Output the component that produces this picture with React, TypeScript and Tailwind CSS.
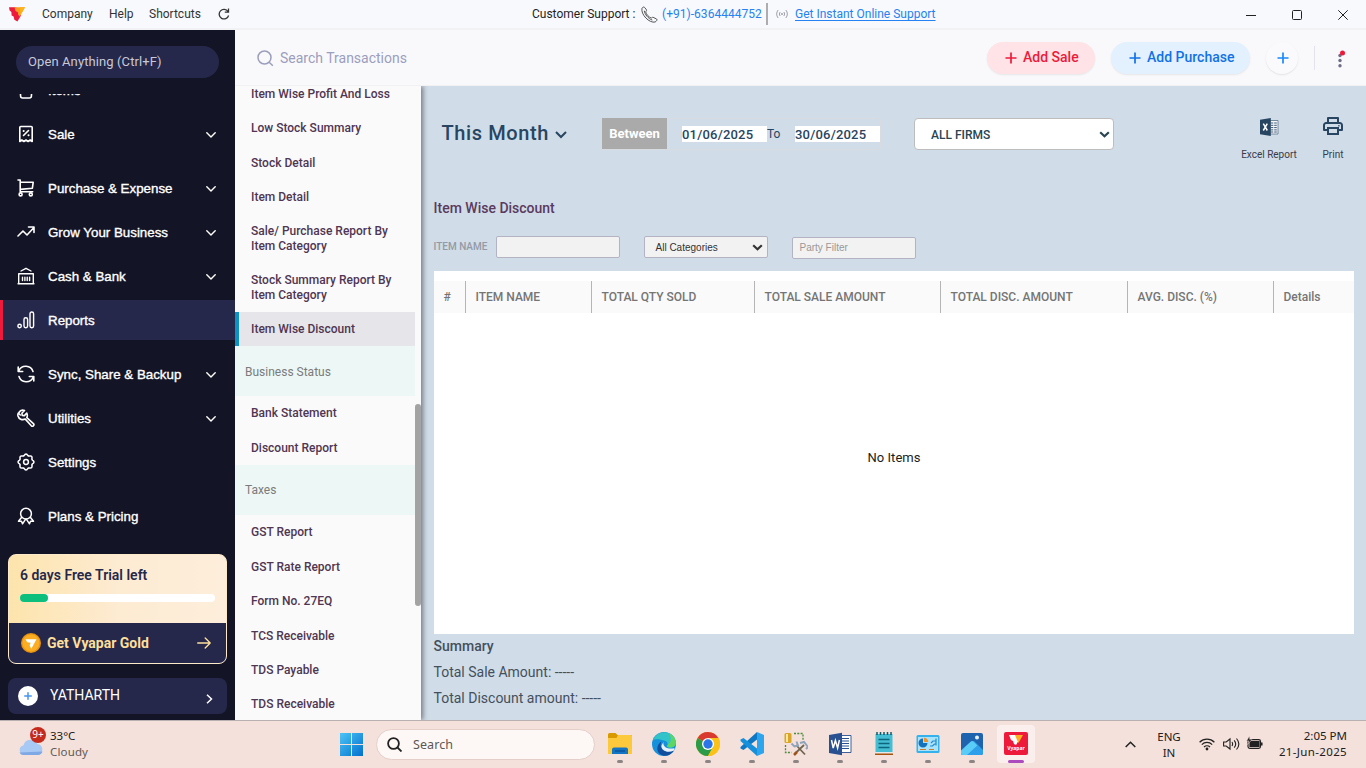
import React from "react";

type IconProps = { className?: string };

function Svg({ children, size = 18, w = 1.6, box = 18 }: { children: React.ReactNode; size?: number; w?: number; box?: number }) {
  return (
    <svg width={size} height={size} viewBox={`0 0 ${box} ${box}`} fill="none" stroke="currentColor" strokeWidth={w} strokeLinecap="round" strokeLinejoin="round" className="shrink-0">
      {children}
    </svg>
  );
}

function gearPath() {
  let d = "";
  for (let i = 0; i < 96; i++) {
    const a = (i / 96) * Math.PI * 2;
    const r = 7.2 + 0.7 * Math.cos(8 * a);
    d += `${i ? "L" : "M"}${(9 + r * Math.cos(a)).toFixed(2)} ${(9 + r * Math.sin(a)).toFixed(2)}`;
  }
  return d + "z";
}

function VLogo({ className }: IconProps) {
  return (
    <svg viewBox="0 0 16 15" className={className}>
      <path d="M0 .3h7.2L12 8.6 8.4 14.4 5.4 12.8 4.6 9.6 2.6 8.4 2.4 5 .6 3.4z" fill="#ed1a3b" />
      <path d="M5.500.3H16L10.800 9.400 9.300 8 8.800 5.200 6.500 4z" fill="#fb9d22" />
      <path d="M11 .3h5L11.4 8z" fill="#fdb515" />
    </svg>
  );
}

const icons: Record<string, React.ReactNode> = {
  items: <Svg><path d="M3 6h12l-.6 9a2 2 0 0 1-2 2H5.600a2 2 0 0 1-2-2zM6 6a3 3 0 0 1 6 0" /></Svg>,
  sale: <Svg><path d="M2.800 16.500V2.500A1 1 0 0 1 3.800 1.500h10.400a1 1 0 0 1 1 1v14l-2-1.500-2.100 1.500L9 15l-2.100 1.500L4.800 15zM6.500 10.500l5-5" /><path d="M6.600 6h.1M11.500 10.200h.1" strokeWidth="2" /></Svg>,
  purchase: <Svg><path d="M1 1h2.200v11.200M3.200 3.200h13l-.8 6-12.200 1.200M3.200 12.700h12.500" /><circle cx="3.600" cy="15.400" r="1.500" /><circle cx="13.800" cy="15.400" r="1.500" /></Svg>,
  grow: <Svg><path d="M1 13l5-5 4 4 7-7.500M11.500 4h5.500v5.500" /></Svg>,
  bank: <Svg w={1.400}><path d="M1.700 6.800h14.600v9.700M1.700 6.800v9.700M4 4L9 1.300 14 4M1 16.700h16M5.500 10.200v3.300M7.900 10.200v3.300M10.200 10.200v3.300M12.600 10.200v3.300" /></Svg>,
  reports: <Svg w={1.400}><circle cx="2.600" cy="15" r="1.700" /><rect x="7" y="6.800" width="3.600" height="10" rx="1.700" /><rect x="13" y="1" width="3.600" height="15.800" rx="1.700" /></Svg>,
  sync: <Svg><path d="M1.200 2v4.500h4.500M1.800 5.800A7.600 7.600 0 0 1 16 6.500M16.800 16v-4.500h-4.500M16.200 12.200A7.600 7.600 0 0 1 2 11.500" /></Svg>,
  utilities: <Svg><path d="M7.500 1.500L4.900 4.200l.3 2.200 2.200.2 2.400-2.600c.9 2.200.6 3.500 0 4.600l6.600 6a1.500 1.500 0 0 1-2.100 2.200l-6-6.700C5 11.500 1.800 10 1 7c-.3-1.300-.1-2.200.3-3l2 2M2 3.500C3.200 1.300 5.500.700 7.500 1.500" /></Svg>,
  settings: <Svg w={1.500}><path d={gearPath()} /><circle cx="9" cy="9" r="2.400" /></Svg>,
  plans: <Svg w={1.500}><circle cx="9" cy="6.700" r="5.400" /><path d="M4.500 10.500L1.500 14.300l3-.1 1 2.600 3-4.500M13.500 10.500l3 3.800-3-.1-1 2.600-3-4.500" /></Svg>,
};

function Chevron({ className = "" }: IconProps) {
  return (
    <svg width="10" height="6" viewBox="0 0 10 6" className={className} fill="none" stroke="currentColor" strokeWidth="1.400" strokeLinecap="round" strokeLinejoin="round">
      <path d="M.8.8L5 5 9.200.8" />
    </svg>
  );
}

function NavItem({ icon, label, arrow, active, className = "" }: { icon: string; label: string; arrow?: boolean; active?: boolean; className?: string }) {
  return (
    <div className={`flex h-10 shrink-0 items-center pr-[19px] font-['Liberation_Sans',sans-serif] text-[13.333px] text-white [-webkit-text-stroke:0.35px_white] ${active ? "border-l-[3px] border-[#ed1a3b] bg-[#26284b] pl-[14px]" : "pl-[17px]"} ${className}`}>
      {icons[icon]}
      <span className="mt-[2px] ml-[13px] grow whitespace-nowrap">{label}</span>
      {arrow && <Chevron className="mt-[2px]" />}
    </div>
  );
}

function Sidebar() {
  return (
    <aside className="flex w-[235px] shrink-0 flex-col bg-[#131426]">
      <div className="mx-4 mt-4 flex h-8 shrink-0 items-center rounded-full bg-[#26284b] px-3 text-[13px] tracking-[0.1px] text-[#c7c9d9]">Open Anything (Ctrl+F)</div>
      <nav className="mt-4 flex h-[460px] shrink-0 flex-col overflow-hidden">
        <NavItem icon="items" label="Items" arrow className="-mt-6" />
        <NavItem icon="sale" label="Sale" arrow className="mt-1" />
        <NavItem icon="purchase" label="Purchase &amp; Expense" arrow className="mt-[14px]" />
        <NavItem icon="grow" label="Grow Your Business" arrow className="mt-1" />
        <NavItem icon="bank" label="Cash &amp; Bank" arrow className="mt-1" />
        <NavItem icon="reports" label="Reports" active className="mt-1" />
        <NavItem icon="sync" label="Sync, Share &amp; Backup" arrow className="mt-[14px]" />
        <NavItem icon="utilities" label="Utilities" arrow className="mt-1" />
        <NavItem icon="settings" label="Settings" className="mt-1" />
        <NavItem icon="plans" label="Plans &amp; Pricing" className="mt-[14px]" />
      </nav>
      <div className="mx-2 h-[110px] shrink-0 overflow-hidden rounded-lg border border-[#fdeacb] bg-linear-to-r from-[#fde4ac] via-[#fdebd2] to-[#fdeedb]">
        <div className="h-[68px] px-[11px] pt-[11px]">
          <div className="text-[14px] leading-[18px] font-semibold text-[#26284b]">6 days Free Trial left</div>
          <div className="mt-[10px] h-2 rounded-full bg-white">
            <div className="h-2 w-7 rounded-full bg-[#0cbf7d]" />
          </div>
        </div>
        <div className="flex h-10 items-center bg-[#26284b] pr-[15px] pl-3 text-[#fddf9c]">
          <svg width="20" height="20" viewBox="0 0 20 20">
            <circle cx="10" cy="10" r="10" fill="#e9930e" />
            <circle cx="10" cy="10" r="8.500" fill="#fbae24" />
            <path d="M4.500 6.200h11L10.300 15.800 8.600 12.600 9.600 9.700 6.200 9.300z" fill="#fff" />
          </svg>
          <span className="ml-[6px] grow text-[14px] font-bold">Get Vyapar Gold</span>
          <svg width="14" height="12" viewBox="0 0 14 12" fill="none" stroke="currentColor" strokeWidth="1.300" strokeLinecap="round" strokeLinejoin="round"><path d="M.7 6h12.500M8.200 1l5 5-5 5" /></svg>
        </div>
      </div>
      <div className="mx-2 mt-[14px] flex h-9 shrink-0 items-center rounded-lg bg-[#26284b] pr-[14px] pl-[10px] text-white">
        <svg width="20" height="20" viewBox="0 0 20 20"><circle cx="10" cy="10" r="10" fill="#fff" /><path d="M10 6.200v7.600M6.200 10h7.600" stroke="#4a94f0" strokeWidth="1.500" /></svg>
        <span className="mb-[2px] ml-[12px] grow text-[14px]">YATHARTH</span>
        <svg width="7" height="10" viewBox="0 0 7 10" className="mt-[6px]" fill="none" stroke="currentColor" strokeWidth="1.500"><path d="M1 .7L5.500 5 1 9.300" /></svg>
      </div>
    </aside>
  );
}

const reportList: { label: string; kind?: "head" | "sel" }[] = [
  { label: "Item Wise Profit And Loss" },
  { label: "Low Stock Summary" },
  { label: "Stock Detail" },
  { label: "Item Detail" },
  { label: "Sale/ Purchase Report By Item Category" },
  { label: "Stock Summary Report By Item Category" },
  { label: "Item Wise Discount", kind: "sel" },
  { label: "Business Status", kind: "head" },
  { label: "Bank Statement" },
  { label: "Discount Report" },
  { label: "Taxes", kind: "head" },
  { label: "GST Report" },
  { label: "GST Rate Report" },
  { label: "Form No. 27EQ" },
  { label: "TCS Receivable" },
  { label: "TDS Payable" },
  { label: "TDS Receivable" },
];

function ReportList() {
  return (
    <div className="z-10 flex w-[186px] shrink-0 overflow-hidden bg-[#fafafa] shadow-[2px_0_5px_rgba(0,0,0,0.45)]">
      <div className="-mt-[9.200px] h-[643.200px] w-[180px] shrink-0 overflow-hidden text-[12px] leading-[14.4px]">
        {reportList.map((r) =>
          r.kind === "head" ? (
            <div key={r.label} className="flex h-[50px] items-center bg-[#edf7f6] pt-[0.800px] pl-[10px] text-[#7b7b7b]">{r.label}</div>
          ) : (
            <div key={r.label} className={`py-[10px] pr-4 font-medium text-[#4f3652] ${r.kind === "sel" ? "border-l-4 border-[#0c93c4] bg-[#e6e5ea] pl-3" : "pl-4"}`}>{r.label}</div>
          ),
        )}
      </div>
      <div className="w-[6px] pt-[318px]">
        <div className="h-[202px] w-[6px] rounded-full bg-[#a3a3a3]" />
      </div>
    </div>
  );
}

function Plus() {
  return <svg width="12" height="12" viewBox="0 0 12 12" stroke="currentColor" strokeWidth="1.700" fill="none"><path d="M6 .5v11M.5 6h11" /></svg>;
}

function TopBar() {
  return (
    <div className="flex h-14 shrink-0 items-center border-b border-[#f1f1f3] bg-[#f9f9fc] pr-[21px] pl-[22px]">
      <svg width="17" height="17" viewBox="0 0 17 17" className="mt-px" fill="none" stroke="#9c9ebd" strokeWidth="1.500"><circle cx="7.500" cy="7.500" r="6.500" /><path d="M12.200 12.200l3.600 3.600" /></svg>
      <span className="mt-[2px] ml-[6px] grow text-[14px] text-[#9c9ebd]">Search Transactions</span>
      <div className="mt-px flex h-8 w-[108px] items-center rounded-full bg-[#ffe3e6] pl-[18px] text-[14px] font-medium text-[#ed1a3b] shadow-[0_1px_2px_rgba(0,0,0,0.08)]"><Plus /><span className="mb-px ml-[6px]">Add Sale</span></div>
      <div className="mt-px ml-4 flex h-8 w-[139px] items-center rounded-full bg-[#e3f1ff] pl-[18px] text-[14px] font-medium text-[#1171e6] shadow-[0_1px_2px_rgba(0,0,0,0.08)]"><Plus /><span className="mb-px ml-[6px]">Add Purchase</span></div>
      <div className="mt-px ml-4 flex size-8 items-center justify-center rounded-full bg-[#fafafc] pl-px text-[#1789fc] shadow-[0_1px_2px_rgba(0,0,0,0.09)]"><Plus /></div>
      <div className="mt-px ml-4 h-6 w-px bg-[#e4e4ea]" />
      <svg width="10" height="20" viewBox="0 0 10 20" className="mt-[3px] ml-[20px]"><g fill="#6d6d85"><circle cx="5" cy="6.500" r="1.700" /><circle cx="5" cy="11.500" r="1.700" /><circle cx="5" cy="16.700" r="1.700" /></g><circle cx="7.500" cy="4" r="2.500" fill="#ed1a3b" /></svg>
    </div>
  );
}

function TitleBar() {
  return (
    <header className="flex h-[30px] shrink-0 items-center border-b-2 border-[#f2f2f4] bg-[#f7f9fd] text-[12px] text-[#333]">
      <VLogo className="ml-[9px] h-[15px] w-4" />
      <span className="ml-[17px] w-[67px]">Company</span>
      <span className="w-[40px]">Help</span>
      <span className="w-[69px]">Shortcuts</span>
      <svg width="12" height="12" viewBox="0 0 12 12" fill="none" stroke="#333" strokeWidth="1.300"><path d="M10 3.500A4.800 4.800 0 1 0 10.600 7.500M10.500.5v3.700H6.800" /></svg>
      <div className="ml-[302px] flex items-center">
        <span className="w-[109px] text-[#1f1f1f]">Customer Support :</span>
        <svg width="17" height="17" viewBox="0 0 17 17" fill="none" stroke="#555" strokeWidth="1"><path d="M1 2.200C2 .8 3 .7 3.700 1.500l1.800 2.400c.4.800-.8 1.600-.8 2.100.5 2.300 3 5 5.400 6 .7.100 1.200-1 2-.7l3.500 1.700c1.200.9-.6 2.600-1.500 3C8.500 17.500-.5 8.500 1 2.200zM3.300 4.700c.3 3.600 4 8 8 9.400" /></svg>
        <span className="ml-[4px] w-[104px] tracking-[0.030px] text-[#2582f2]">(+91)-6364444752</span>
        <span className="h-[22px] w-[2px] bg-[#adadb0]" />
        <svg width="12" height="10" viewBox="0 0 12 10" className="ml-2" fill="none" stroke="#a0a0aa" strokeWidth="1"><path d="M2.200 1C.2 3.500.2 6.500 2.200 9M9.800 1c2 2.500 2 5.500 0 8M4.200 3c-1 1.300-1 2.700 0 4M7.800 3c1 1.300 1 2.700 0 4" /><circle cx="6" cy="5" r=".6" fill="#a0a0aa" /></svg>
        <span className="ml-[7px] text-[#2582f2] underline underline-offset-2">Get Instant Online Support</span>
      </div>
      <div className="mt-[2px] mr-[18px] ml-auto flex items-center gap-9 text-[#222]">
        <svg width="10" height="11" viewBox="0 0 10 11" stroke="currentColor"><path d="M0 5.500h10" /></svg>
        <svg width="10" height="10" viewBox="0 0 10 10" fill="none" stroke="currentColor"><rect x=".5" y=".5" width="9" height="9" rx="1" /></svg>
        <svg width="10" height="10" viewBox="0 0 10 10" fill="none" stroke="currentColor"><path d="M.3.3l9.400 9.400M9.700.3L.3 9.700" /></svg>
      </div>
    </header>
  );
}

function ExcelIcon() {
  return (
    <svg width="19" height="18" viewBox="0 0 19 18" className="ml-px">
      <path d="M10 2.500h8v13.500h-8z" fill="#f4f7fa" stroke="#5b718a" strokeWidth=".8" />
      <path d="M11 5h2.300M14.200 5h2.600M11 7.300h2.300M14.200 7.300h2.600M11 9.600h2.300M14.200 9.600h2.600M11 11.900h2.300M14.200 11.900h2.600M11 14h2.300M14.200 14h2.600" stroke="#3f5873" strokeWidth="1" />
      <path d="M0 1.800L10.800 0v18L0 16.200z" fill="#284561" />
      <path d="M3.300 5.700l4 6.800M7.300 5.700l-4 6.800" stroke="#fff" strokeWidth="1.500" />
    </svg>
  );
}

function PrinterIcon() {
  return (
    <svg width="20" height="18" viewBox="0 0 20 18" fill="none" stroke="#284561" strokeWidth="2" strokeLinejoin="round">
      <path d="M5 5.500V1h10v4.500M5 13H1V8.200A2.200 2.200 0 0 1 3.200 6h13.600A2.200 2.200 0 0 1 19 8.200V13h-4" />
      <path d="M5 11h10v6H5z" strokeLinejoin="miter" />
      <path d="M15.300 8.700h1.200" strokeWidth="1.500" />
    </svg>
  );
}

const columns = [
  { t: "#", c: "w-[31px]" },
  { t: "ITEM NAME", c: "w-[126px]" },
  { t: "TOTAL QTY SOLD", c: "w-[163px]" },
  { t: "TOTAL SALE AMOUNT", c: "w-[186px]" },
  { t: "TOTAL DISC. AMOUNT", c: "w-[187px]" },
  { t: "AVG. DISC. (%)", c: "w-[146px]" },
  { t: "Details", c: "w-[81px]" },
];

function Content() {
  return (
    <main className="flex grow flex-col bg-[#d0dce8] pl-[13px]">
      <div className="mt-8 flex h-8 items-start">
        <div className="flex h-[30px] w-[168px] items-center pl-[7.500px] text-[20px] font-medium tracking-[0.600px] text-[#284561]">
          This Month
          <svg width="12" height="8" viewBox="0 0 12 8" className="mt-[3px] ml-[6px]" fill="none" stroke="currentColor" strokeWidth="2"><path d="M1 1l5 5 5-5" /></svg>
        </div>
        <div className="flex h-8 w-[279px] items-center rounded-r-[4px] border border-l-0 border-[#d8dbe0] text-[13px] text-[#284561]">
          <div className="-mt-px flex h-[31px] w-[65px] items-center justify-center bg-[#aaaaaa] font-bold text-white">Between</div>
          <div className="ml-[15px] h-4 w-[85px] bg-white text-[13px] leading-[17px] font-medium tracking-[0.200px]">01/06/2025</div>
          <div className="w-7 text-[12px]">To</div>
          <div className="h-4 w-[85px] bg-white text-[13px] leading-[17px] font-medium tracking-[0.200px]">30/06/2025</div>
        </div>
        <div className="ml-[33px] flex h-8 w-[200px] items-center justify-between rounded-[4px] border border-[#bdbdbd] bg-white pt-px pr-[3px] pl-4 text-[12px] font-medium text-[#284551]">
          ALL FIRMS
          <svg width="11" height="7" viewBox="0 0 11 7" fill="none" stroke="currentColor" strokeWidth="2.200"><path d="M1.200 1.200l4.300 4 4.300-4" /></svg>
        </div>
        <div className="ml-[119px] flex w-[72px] flex-col items-center text-[10px] text-[#3a3a48]"><ExcelIcon /><span className="mt-[11px] whitespace-nowrap">Excel Report</span></div>
        <div className="-mt-px flex w-14 flex-col items-center text-[10px] text-[#3a3a48]"><PrinterIcon /><span className="mt-[12px]">Print</span></div>
      </div>
      <h1 className="mt-[49px] -ml-[0.500px] text-[14px] leading-[18px] font-medium text-[#5b3a5e]">Item Wise Discount</h1>
      <div className="mt-[19px] flex h-[22px] font-['Liberation_Sans'] text-[10px]">
        <label className="w-[62px] font-['Roboto'] text-[10px] leading-[22px] font-medium text-[#949aa5]"><span className="-ml-[0.500px]">ITEM NAME</span></label>
        <div className="w-[124px] rounded-[2px] border border-[#b3b3c4] bg-[#f2f2f2]" />
        <div className="ml-6 flex w-[124px] items-center justify-between rounded-[2px] border border-[#b3b3c4] bg-[#f2f2f2] pt-px pr-1 pl-[10.500px] text-[#333]">
          All Categories
          <svg width="11" height="7" viewBox="0 0 11 7" className="mb-px" fill="none" stroke="currentColor" strokeWidth="2.200"><path d="M1.200 1.200l4.300 4 4.300-4" /></svg>
        </div>
        <div className="mt-px -mb-px ml-6 flex w-[124px] items-center rounded-[2px] border border-[#b3b3c4] bg-[#f2f2f2] pb-px pl-[6.500px] text-[#999]">Party Filter</div>
      </div>
      <div className="mt-[13px] flex h-[363px] w-[920px] flex-col bg-white pt-[10px]">
        <div className="flex h-8 bg-[#fafafa] text-[12px] leading-8 font-medium text-[#757575]">
          {columns.map((c, i) => (
            <div key={c.t} className={`shrink-0 whitespace-nowrap pl-[9.500px] ${c.c} ${i === 0 ? "" : "border-l border-[#b5b5b5]"}`}>{c.t}</div>
          ))}
        </div>
        <div className="pt-[136px] text-center text-[13px] leading-[18px] tracking-[0.050px] text-[#1c1c1c]">No Items</div>
      </div>
      <div className="mt-[2px] -ml-[0.500px] text-[14px] text-[#44505c]">
        <div className="h-[26px] leading-[20px] font-medium">Summary</div>
        <div className="h-[26px] leading-[20px]">Total Sale Amount: -----</div>
        <div className="h-[26px] leading-[20px]">Total Discount amount: -----</div>
      </div>
    </main>
  );
}

const apps: { name: string; art: React.ReactNode }[] = [
  { name: "files", art: <><path d="M0 2.500a1.500 1.500 0 0 1 1.500-1.500h6l2 2H24v4H0z" fill="#d99a00" /><path d="M10 3h13a1 1 0 0 1 1 1v18H0V6h8.500z" fill="#fdc93c" /><path d="M4 22v-4.500A2 2 0 0 1 6 15.500h12a2 2 0 0 1 2 2V22z" fill="#1475c4" /><path d="M7 19h10" stroke="#0a569d" strokeWidth="1.500" /></> },
  { name: "edge", art: <><circle cx="12" cy="12" r="12" fill="#1591dc" /><path d="M.8 8.500C4 -.5 16-2.500 21.500 4.500c3 4 3.200 8.500-.7 10.500-2.700 1.200-5.600.7-6-1 1.800-2.200.5-5-2.800-5.500C7.500 7.500 3 6.500.8 8.500z" fill="#31c3c7" /><path d="M17 1.200c5 2.300 8 7.800 6.500 11.500-1.300 3-6.300 3.500-8 2-.5-.7.500-1 .5-2.500 3-2 4-6 1-11z" fill="#5cd765" /><path d="M9.500 9.500c-3 6 2 12 12.500 9C17 26.500 6 25 5.300 17c0-4 2-6.500 4.200-7.500z" fill="#114f9e" /><path d="M11.500 10c-1 4 2.500 7.500 10.500 6.300.8 0 .8.700 0 2.200-6 3-13 .5-12.500-5z" fill="#e8f2f8" /></> },
  { name: "chrome", art: <><circle cx="12" cy="12" r="12" fill="#fbc116" /><path d="M12 12L1.600 6A12 12 0 0 1 22.400 6.200z" fill="#d93a2f" /><path d="M12 12L1.600 6A12 12 0 0 0 12 24l5-9z" fill="#2c9b49" /><path d="M12 6h10.400A12 12 0 0 1 12 24l5.200-9z" fill="#fbc116" /><circle cx="12" cy="12" r="6" fill="#fff" /><circle cx="12" cy="12" r="4.700" fill="#2b75e8" /></> },
  { name: "code", art: <><path d="M17 0l7 3v18l-7 3z" fill="#2ba5ee" /><path d="M17 0v7.500L3.500 18 .5 16.500V15z" fill="#0f78c4" /><path d="M17 24v-7.500L3.500 6 .5 7.500V9z" fill="#1690da" /></> },
  { name: "tools", art: <><rect x=".5" y="1" width="7" height="10" rx="1.500" fill="#d9a62a" /><path d="M2 2h2v8H2z" fill="#fae79e" /><path d="M10 1.500h9v7M1.500 13v7.500h6" fill="none" stroke="#4b8b3b" strokeWidth="1.300" strokeDasharray="2 1.300" /><path d="M10.500 22L20 13M12 13l9 9.500" stroke="#6f6550" strokeWidth="1.800" /><path d="M7.500 11.500l3 3 3.500-1-1.500-4M16 11l4-1 4 5-2 2" fill="none" stroke="#8fa4bb" strokeWidth="2" /><path d="M10 23l3-3" stroke="#9c541b" strokeWidth="2.500" /></> },
  { name: "word", art: <><path d="M12 3.500h11v17H12z" fill="#fff" stroke="#295091" strokeWidth=".9" /><path d="M14 6.500h7M14 9h7M14 11.500h7M14 14h7M14 16.500h7" stroke="#295091" strokeWidth="1.200" /><path d="M1 3L14 .8v22.400L1 21z" fill="#295091" /><path d="M3.500 8l1.700 8 2.200-7.500 2.200 7.500 1.800-8" fill="none" stroke="#fff" strokeWidth="1.500" /></> },
  { name: "notes", art: <><path d="M3.500 2h17v18h-17z" fill="#45bdd3" /><path d="M3 21h18v2H3z" fill="#a8530d" /><path d="M3 20h18v1.500H3z" fill="#e7e7e7" /><path d="M5 0v3M8.500 0v3M12 0v3M15.500 0v3M19 0v3" stroke="#0f5a6c" strokeWidth="1.500" /><path d="M6.500 7.500h11M6.500 11.500h11M6.500 15.500h11" stroke="#0f657b" strokeWidth="1.500" /></> },
  { name: "panel", art: <><rect x=".5" y="3" width="23" height="18" rx="1.500" fill="#35b1ec" /><rect x="2" y="5" width="20" height="14" fill="#a9e2fb" /><path d="M7 11V6.500A4.500 4.500 0 1 0 11.500 11z" fill="#1472bd" /><path d="M8 10V5.800A4.500 4.500 0 0 1 12.300 10z" fill="#f09428" /><path d="M15 11l2-2h3M14 14h2.500l2-2h1.500M20 6.500v7" fill="none" stroke="#238bce" strokeWidth="1.200" /><path d="M4 17.500h6M13 17.500h5" stroke="#d37a1f" strokeWidth="1.200" /></> },
  { name: "photos", art: <><rect x="1" y="1" width="22" height="22" rx="2" fill="#1f62ae" /><path d="M1 20L12 9.500a2 2 0 0 1 2.600 0L23 18v3a2 2 0 0 1-2 2H3a2 2 0 0 1-2-2z" fill="#2e9fe9" /><path d="M1 18.500l9.800-9a2 2 0 0 1 2.500 0l4 4L7 23H3a2 2 0 0 1-2-2z" fill="#5accf8" /><circle cx="17" cy="5.500" r="2" fill="#e6f3fb" /></> },
];

function Taskbar() {
  return (
    <footer className="flex h-12 shrink-0 items-center border-t border-[#b9b0b2] bg-[#f4e1db] font-['Noto_Sans'] text-[12px] text-[#202020]">
      <div className="relative -mt-1 ml-[18px] h-[30px] w-[28px]">
        <svg width="26" height="17" viewBox="0 0 26 17" className="absolute top-[11px] left-0"><path d="M6 16a5 5 0 0 1-.5-9.800A7.500 7.500 0 0 1 19.500 5 5.600 5.600 0 0 1 20 16z" fill="#a8c9f3" /><path d="M1.500 13.500A4.500 4.500 0 0 0 6 16h14a5 5 0 0 0 4.500-3.500z" fill="#7fa9e4" /></svg>
        <span className="absolute -top-px left-3 flex size-4 items-center justify-center rounded-full bg-[#c42b1c] text-[10px] text-white">9+</span>
      </div>
      <div className="-mt-[2px] ml-[4px] w-[285px] text-[11.500px] leading-4">
        <div>33°C</div>
        <div className="tracking-[0.150px] text-[#605a58]">Cloudy</div>
      </div>
      <svg width="23" height="23" viewBox="0 0 23 23" className="ml-[5px]">
        <defs><linearGradient id="w" x1="0" y1="0" x2="1" y2="1"><stop offset="0" stopColor="#4cc4f7" /><stop offset="1" stopColor="#0370cc" /></linearGradient></defs>
        <path d="M0 0h11v11H0zM12 0h11v11H12zM0 12h11v11H0zM12 12h11v11H12z" fill="url(#w)" />
      </svg>
      <div className="ml-[13px] flex h-[31px] w-[219px] items-center rounded-full border border-[#e5cfca] bg-[#fdf7f5] pl-[10px] text-[12.500px] text-[#5c5856]">
        <svg width="15" height="15" viewBox="0 0 15 15" fill="none" stroke="#222" strokeWidth="1.800"><circle cx="6.500" cy="6.500" r="5.400" /><path d="M10.500 10.500l4 4" /></svg>
        <span className="mt-px ml-[11px] tracking-[0.100px]">Search</span>
      </div>
      <div className="-mt-[2px] ml-[3px] flex">
        {apps.map((a) => (
          <div key={a.name} className="flex w-11 flex-col items-center pt-[7px]">
            <svg width="24" height="24" viewBox="0 0 24 24">{a.art}</svg>
            <span className="mt-[4px] h-[3px] w-[6px] rounded-full bg-[#8d8583]" />
          </div>
        ))}
        <div className="ml-[3px] flex h-[38px] w-[38px] flex-col items-center rounded-[4px] bg-[#faefec] pt-[7px]">
          <div className="flex h-[23px] w-6 flex-col items-center rounded-[2px] bg-[#ed1a3b] pt-[3px]">
            <svg width="14" height="10" viewBox="0 0 14 10"><path d="M0 0h8l2 5-3 5-2-1-1-3-2-1z" fill="#fff" /><path d="M6 0h8L9.500 8 8 5z" fill="#fdb022" /></svg>
            <span className="text-[5px] leading-[7px] font-bold text-white">Vyapar</span>
          </div>
          <span className="mt-[5px] h-[3px] w-4 rounded-full bg-[#ab4bbd]" />
        </div>
      </div>
      <svg width="11" height="7" viewBox="0 0 11 7" className="-mt-px ml-[90px]" fill="none" stroke="#222" strokeWidth="1.500"><path d="M.7 6l4.800-4.800L10.300 6" /></svg>
      <div className="ml-[15px] w-[36px] text-center text-[11.500px] leading-4"><div>ENG</div><div>IN</div></div>
      <svg width="16" height="14" viewBox="0 0 16 14" className="-mt-[2px] ml-[12px]" fill="none" stroke="#222" strokeWidth="1.200"><path d="M.6 5.200a10.500 10.500 0 0 1 14.800 0M2.800 7.600a7.300 7.300 0 0 1 10.400 0M5 10a4.300 4.300 0 0 1 6 0" /><circle cx="8" cy="12" r="1.400" fill="#222" stroke="none" /></svg>
      <svg width="17" height="14" viewBox="0 0 17 14" className="-mt-[2px] ml-[8px]" fill="none" stroke="#222" strokeWidth="1.100"><path d="M.6 5v4h2.600L7 12V2L3.200 5zM9 5c.8 1.300.8 2.700 0 4M11.200 3.300c2 2.500 2 5 0 7.400M13.500 1.500c3 3.500 3 7.500 0 11" /></svg>
      <svg width="17" height="14" viewBox="0 0 17 14" className="-mt-[4px] ml-[6px]" fill="none" stroke="#222" strokeWidth="1.200"><rect x="2" y="3.600" width="12.500" height="8.800" rx="1.800" /><path d="M4 5.500h9v5H4z" fill="#222" /><path d="M15.700 6.500v3" strokeWidth="1.700" /><path d="M3.500 0L.5 5h2.500L1.500 8.500 6 3.700H3.800z" fill="#222" stroke="#f4e1db" strokeWidth=".5" /></svg>
      <div className="-mt-[2px] ml-auto pr-[19px] text-right text-[11.500px] leading-4"><div>2:05 PM</div><div className="tracking-[0.350px]">21-Jun-2025</div></div>
    </footer>
  );
}

export default function App() {
  return (
    <div className="flex h-[768px] w-[1366px] flex-col overflow-hidden font-['Roboto',sans-serif]">
      <TitleBar />
      <div className="flex h-[690px] shrink-0">
        <Sidebar />
        <div className="flex grow flex-col">
          <TopBar />
          <div className="flex h-[634px] shrink-0 overflow-hidden">
            <ReportList />
            <Content />
          </div>
        </div>
      </div>
      <Taskbar />
    </div>
  );
}
